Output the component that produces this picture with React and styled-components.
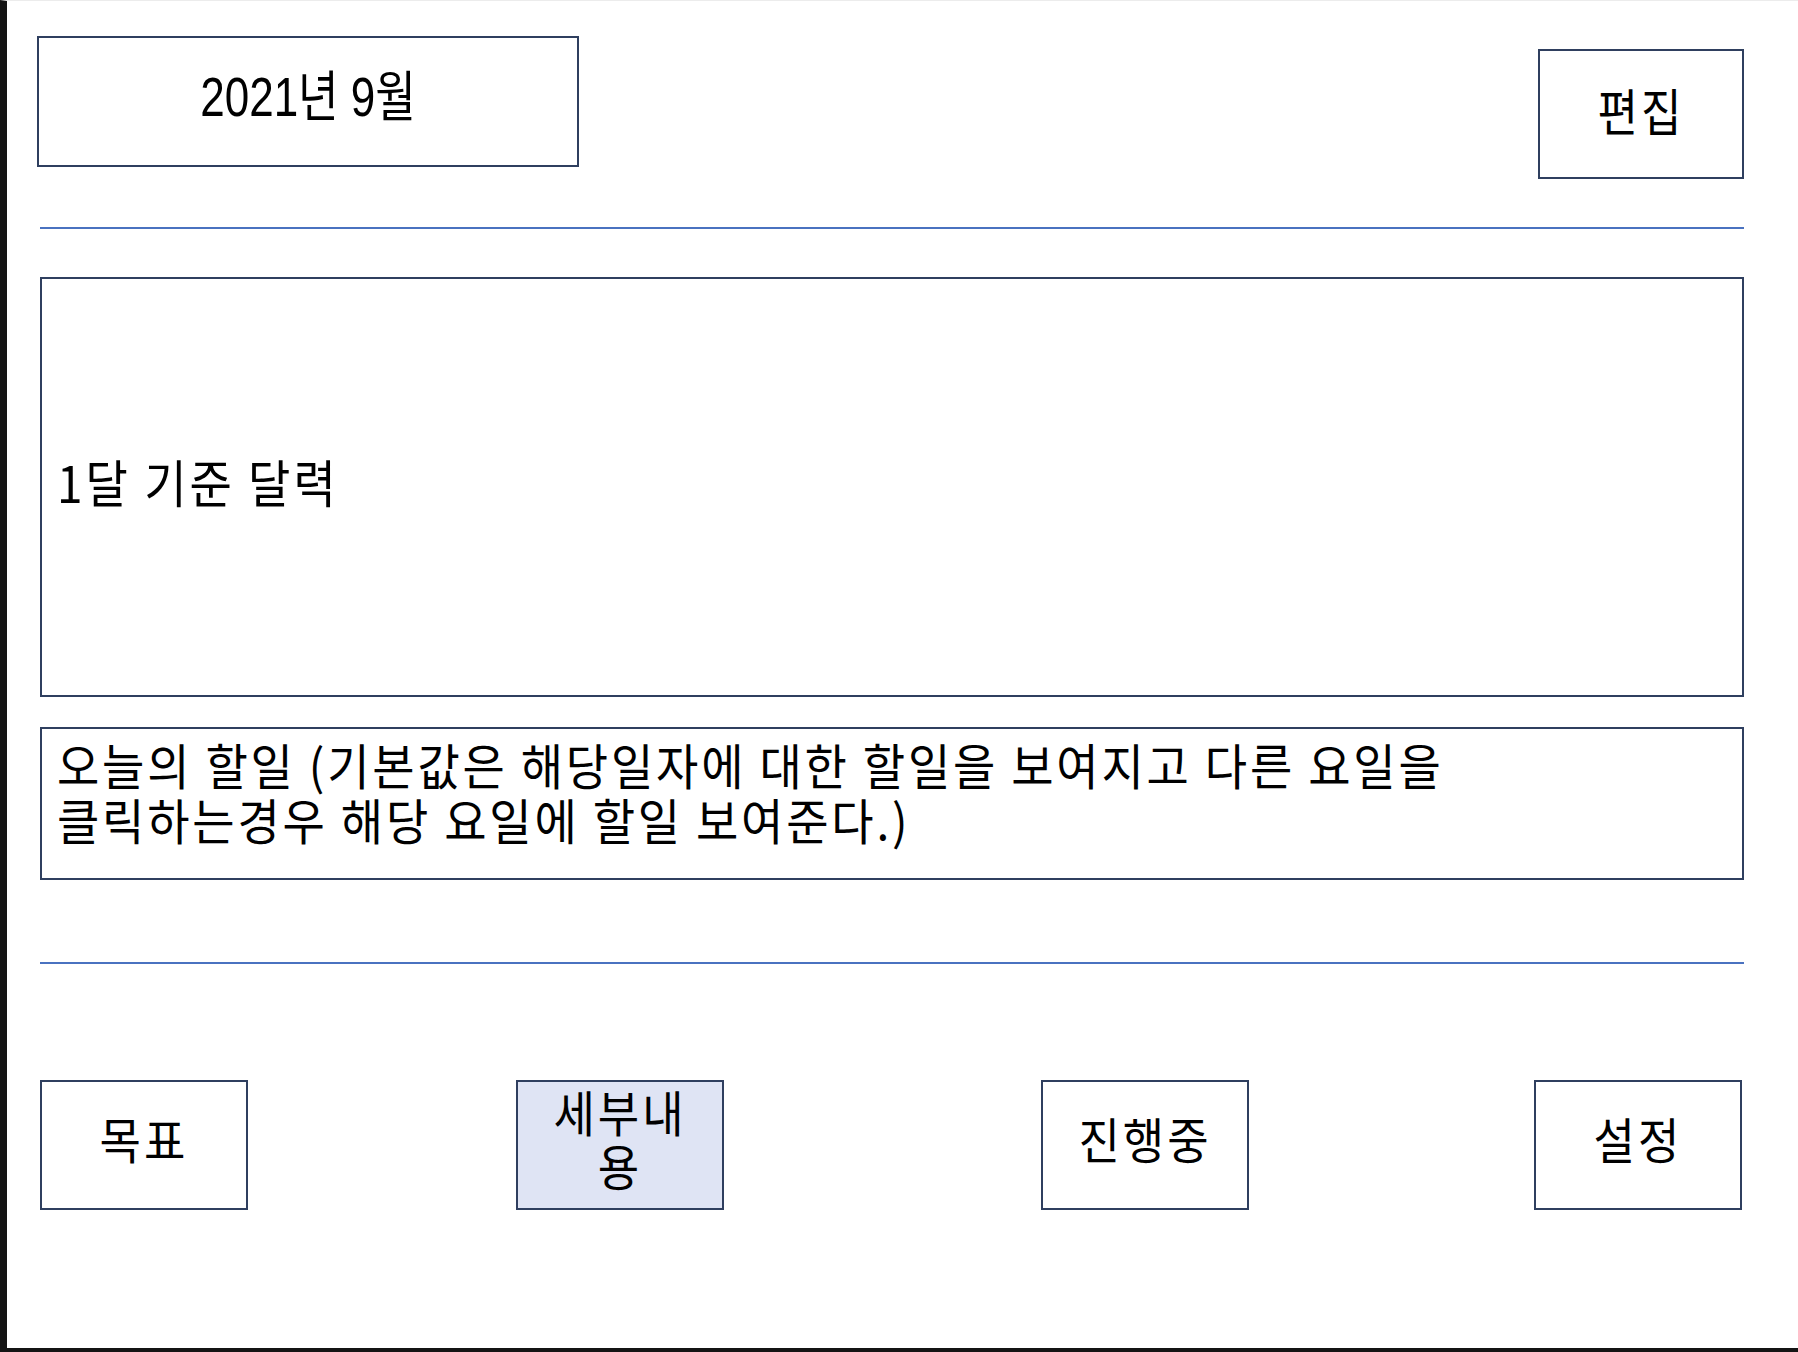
import React from 'react';
import styled, { createGlobalStyle } from 'styled-components';

const navItems = [
  { label: '목표', offset: 0 },
  { label: '세부내용', offset: 268, active: true },
  { label: '진행중', offset: 317 },
  { label: '설정', offset: 285 },
];

export default function App() {
  return (
    <>
      <GlobalStyle />
      <Page>
        <Header>
          <DateBox>
            <Label $size={44} $stretch={1.25} $latin>
              2021년 9월
            </Label>
          </DateBox>
          <EditButton>
            <Label $size={44} $stretch={1.14} $spacing={3}>
              편집
            </Label>
          </EditButton>
        </Header>

        <Rule $top={48} />

        <CalendarBox>
          <Label $size={46} $stretch={1.1} $spacing={3}>
            1달 기준 달력
          </Label>
        </CalendarBox>

        <TodoBox>
          <TodoText>
            오늘의 할일 (기본값은 해당일자에 대한 할일을 보여지고 다른 요일을
            <br />
            클릭하는경우 해당 요일에 할일 보여준다.)
          </TodoText>
        </TodoBox>

        <Rule $top={82} />

        <NavRow>
          {navItems.map(({ label, offset, active }) => (
            <NavButton key={label} $offset={offset} $active={active}>
              <NavLabel>{label}</NavLabel>
            </NavButton>
          ))}
        </NavRow>
      </Page>
    </>
  );
}

const GlobalStyle = createGlobalStyle`
  html, body {
    margin: 0;
    padding: 0;
    background: #ffffff;
  }

  body {
    font-family: 'Noto Sans CJK KR', 'Noto Sans', sans-serif;
    color: #000000;
  }
`;

const Page = styled.div`
  box-sizing: border-box;
  width: 1798px;
  height: 1352px;
  display: flex;
  flex-direction: column;
  padding: 35px 54px 0 33px;
  border-top: 1px solid #ececec;
  border-left: 7px solid #141414;
  border-bottom: 4px solid #141414;
  background: #ffffff;
`;

const Box = styled.div`
  box-sizing: border-box;
  border: 2px solid #2f3f5f;
  background: ${({ $active }) => ($active ? '#dfe4f4' : '#ffffff')};
`;

const Header = styled.div`
  display: flex;
  justify-content: space-between;
  align-items: flex-start;
`;

const DateBox = styled(Box)`
  width: 542px;
  height: 131px;
  margin-left: -3px;
  display: flex;
  align-items: center;
  justify-content: center;
  padding-bottom: 8px;
`;

const EditButton = styled(Box)`
  width: 206px;
  height: 130px;
  margin-top: 13px;
  display: flex;
  align-items: center;
  justify-content: center;
  padding-bottom: 10px;
`;

const Label = styled.span`
  display: inline-block;
  font-family: ${({ $latin }) =>
    $latin
      ? "'Liberation Sans', 'Noto Sans CJK KR', sans-serif"
      : "'Noto Sans CJK KR', sans-serif"};
  font-size: ${({ $size }) => $size}px;
  letter-spacing: ${({ $spacing }) => $spacing || 0}px;
  line-height: 1.2;
  white-space: nowrap;
  transform: scaleY(${({ $stretch }) => $stretch});
`;

const Rule = styled.div`
  height: 2px;
  margin-top: ${({ $top }) => $top}px;
  background: #4a72c0;
`;

const CalendarBox = styled(Box)`
  height: 420px;
  margin-top: 48px;
  display: flex;
  align-items: center;
  padding: 0 15px 10px;
`;

const TodoBox = styled(Box)`
  height: 153px;
  margin-top: 30px;
  padding: 7px 15px 0;
`;

const TodoText = styled.p`
  margin: 0;
  font-size: 46px;
  line-height: 52px;
  letter-spacing: 2.8px;
  white-space: nowrap;
  transform: scaleY(1.06);
  transform-origin: top left;
`;

const NavRow = styled.div`
  display: flex;
  margin-top: 116px;
`;

const NavButton = styled(Box)`
  width: 208px;
  height: 130px;
  margin-left: ${({ $offset }) => $offset}px;
  display: flex;
  align-items: center;
  justify-content: center;
  padding: 0 20px 14px;
  text-align: center;
`;

const NavLabel = styled.span`
  display: block;
  font-size: 45px;
  line-height: 50px;
  letter-spacing: 3px;
  transform: scaleY(1.08);
`;
